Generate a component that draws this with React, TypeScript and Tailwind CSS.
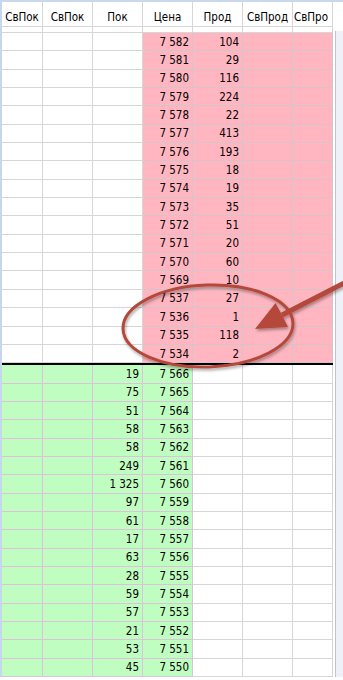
import React from "react";

const FONT = "font-['DejaVu_Sans_Condensed','DejaVu_Sans',sans-serif] font-stretch-condensed";

const WIDTHS = ["w-[41px]", "w-[50px]", "w-[50px]", "w-[50px]", "w-[50px]", "w-[50px]", "w-[40px]"];
const HEADERS = ["СвПок", "СвПок", "Пок", "Цена", "Прод", "СвПрод", "СвПро"];

type Kind = "w" | "p" | "g";

const KIND_CLS: Record<Kind, string> = {
  w: "bg-white border-[#d6d6d6]",
  p: "bg-[#ffb6c1] border-[#d2c6ca]",
  g: "bg-[#c0fdc0] border-[#dcc2dc]",
};

// asks: price, sell volume
const ASKS: [string, string][] = [
  ["7 582", "104"],
  ["7 581", "29"],
  ["7 580", "116"],
  ["7 579", "224"],
  ["7 578", "22"],
  ["7 577", "413"],
  ["7 576", "193"],
  ["7 575", "18"],
  ["7 574", "19"],
  ["7 573", "35"],
  ["7 572", "51"],
  ["7 571", "20"],
  ["7 570", "60"],
  ["7 569", "10"],
  ["7 537", "27"],
  ["7 536", "1"],
  ["7 535", "118"],
  ["7 534", "2"],
];

// bids: buy volume, price
const BIDS: [string, string][] = [
  ["19", "7 566"],
  ["75", "7 565"],
  ["51", "7 564"],
  ["58", "7 563"],
  ["58", "7 562"],
  ["249", "7 561"],
  ["1 325", "7 560"],
  ["97", "7 559"],
  ["61", "7 558"],
  ["17", "7 557"],
  ["63", "7 556"],
  ["28", "7 555"],
  ["59", "7 554"],
  ["57", "7 553"],
  ["21", "7 552"],
  ["53", "7 551"],
  ["45", "7 550"],
];

const Row = ({ cells, kinds }: { cells: string[]; kinds: Kind[] }) => (
  <div className="flex h-[18.35px]">
    {cells.map((c, i) => (
      <div
        key={i}
        className={`flex items-center justify-end pr-[3px] pt-[1px] border-r border-b shrink-0 ${WIDTHS[i]} ${KIND_CLS[kinds[i]]}`}
      >
        {c}
      </div>
    ))}
  </div>
);

export default function App() {
  return (
    <div className={`relative w-[343px] h-[680px] overflow-hidden bg-white text-[11.5px] leading-[13px] text-black ${FONT}`}>
      <div className="h-[2px] bg-[#c9d8ec]" />
      <div className="flex">
        {/* GRID */}
        <div className="flex flex-col w-[333px] border-l-2 border-[#c6d6ec]">
          <div className="flex h-[25px]">
            {HEADERS.map((h, i) => (
              <div
                key={i}
                className={`flex pt-[9px] border-r border-b border-[#d6d6d6] shrink-0 overflow-hidden whitespace-nowrap ${WIDTHS[i]} ${
                  i === 6 ? "justify-start pl-[1px]" : "justify-center"
                }`}
              >
                {i === 6 ? "СвПро" : h}
              </div>
            ))}
          </div>
          <div className="flex h-[6px]">
            {WIDTHS.map((w, i) => (
              <div key={i} className={`border-r border-b border-[#d6d6d6] shrink-0 ${w}`} />
            ))}
          </div>

          {ASKS.map(([price, vol], r) => (
            <Row key={"a" + r} cells={["", "", "", price, vol, "", ""]} kinds={["w", "w", "w", "p", "p", "p", "p"]} />
          ))}

          <div className="h-[2px] bg-black" />

          {BIDS.map(([vol, price], r) => (
            <Row key={"b" + r} cells={["", "", vol, price, "", "", ""]} kinds={["g", "g", "g", "g", "w", "w", "w"]} />
          ))}
        </div>

        {/* RIGHT EDGE */}
        <div className="flex flex-col w-[10px]">
          <div className="h-[29px] bg-white" />
          <div className="flex flex-1">
            <div className="w-[2px] bg-white" />
            <div className="w-[1px] bg-[#c4c4c4]" />
            <div className="flex-1 bg-[#eef2f8]" />
          </div>
        </div>
      </div>

      {/* ANNOTATION */}
      <svg
        className="absolute inset-0 pointer-events-none"
        width="343"
        height="680"
        viewBox="0 0 343 680"
      >
        <defs>
          <filter id="sh" x="-20%" y="-20%" width="140%" height="140%">
            <feDropShadow dx="1" dy="2" stdDeviation="1.5" floodColor="#000" floodOpacity="0.35" />
          </filter>
        </defs>
        <g filter="url(#sh)">
          <ellipse cx="208" cy="326" rx="85" ry="41" fill="none" stroke="#b44a3a" strokeWidth="3" transform="rotate(-2 208 326)" />
          <line x1="350" y1="280" x2="282" y2="315" stroke="#b44a3a" strokeWidth="5" />
          <polygon points="255,329 275.5,303 282,315 288,327" fill="#b44a3a" />
        </g>
      </svg>
    </div>
  );
}
